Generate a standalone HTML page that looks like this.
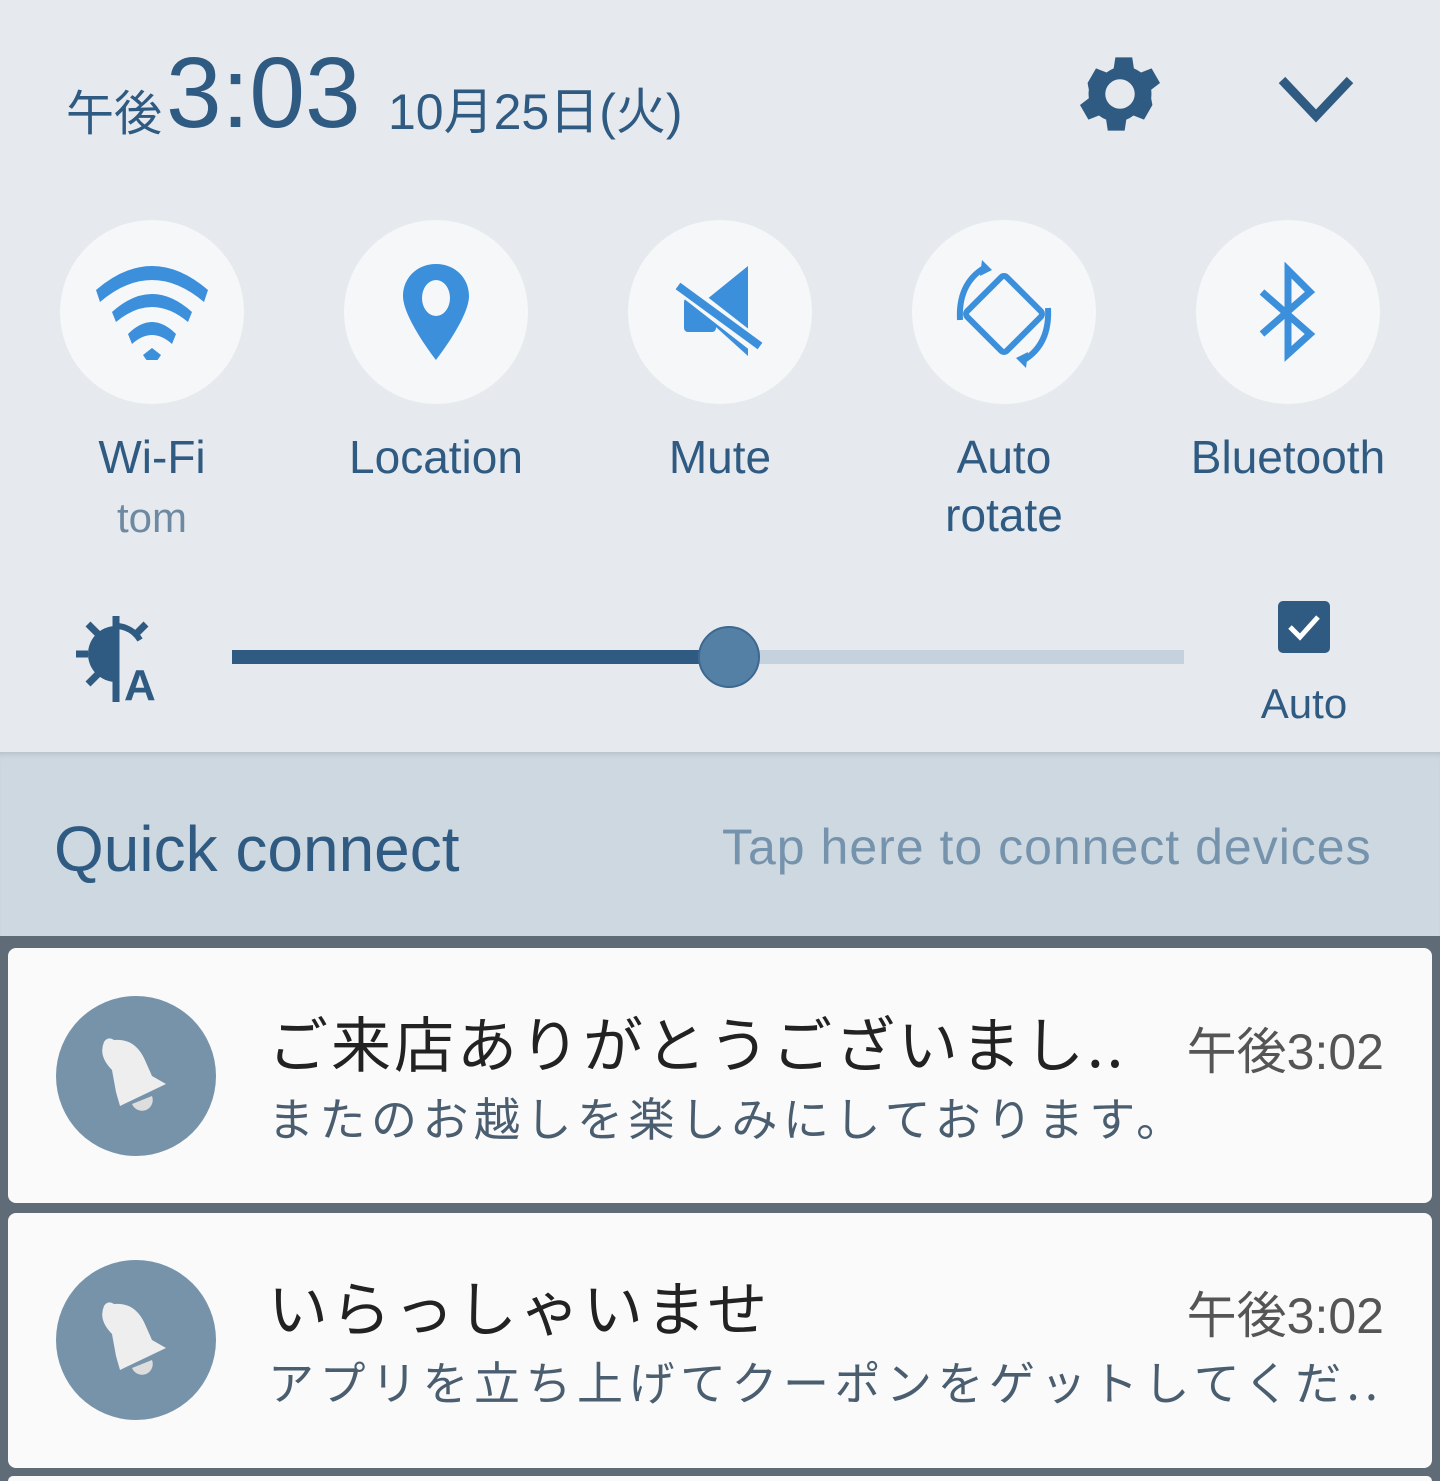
<!DOCTYPE html>
<html><head><meta charset="utf-8"><style>
*{margin:0;padding:0;box-sizing:border-box}
html,body{width:1440px;height:1481px;overflow:hidden}
body{background:#5f6b76;font-family:"Liberation Sans","Noto Sans CJK JP",sans-serif;position:relative}
.a{position:absolute}
.top{left:0;top:0;width:1440px;height:752px;background:#e6eaee}
.qc{left:0;top:752px;width:1440px;height:184px;background:#cdd8e0;box-shadow:inset 0 6px 6px -4px rgba(0,0,0,.12)}
.c{width:184px;height:184px;border-radius:50%;background:#f5f7f9;top:220px}
.lbl{color:#2f5a82;font-size:46px;text-align:center;width:284px;top:428px;line-height:58px}
.card{left:8px;width:1424px;background:#fafafa;border-radius:8px}
.av{left:56px;width:160px;height:160px;border-radius:50%;background:#7793aa}
.t1{left:268px;font-size:60px;color:#222;font-family:"Noto Sans CJK JP",sans-serif;letter-spacing:3px}
.t2{left:268px;font-size:46px;color:#4a5e70;font-family:"Noto Sans CJK JP",sans-serif;letter-spacing:5.5px}
.tm{right:56px;font-size:50px;color:#555;font-family:"Liberation Sans","Noto Sans CJK JP",sans-serif}
</style></head><body>
<div class="a top"></div>
<div class="a" style="left:66px;top:74px;font-size:48px;color:#2f5a82;font-family:'Noto Sans CJK JP',sans-serif">午後</div>
<div class="a" style="left:166px;top:38px;font-size:100px;color:#2f5a82;line-height:110px">3:03</div>
<div class="a" style="left:388px;top:72px;font-size:50px;color:#2f5a82;font-family:'Liberation Sans','Noto Sans CJK JP',sans-serif">10月25日(火)</div>
<svg class="a" style="left:1080px;top:54px" width="80" height="80" viewBox="2.5 2.5 19 19"><path fill="#2f5a82" d="M19.4 13a7.5 7.5 0 0 0 0-2l2.1-1.6-2-3.5-2.5 1a7.3 7.3 0 0 0-1.7-1l-.4-2.6h-4l-.4 2.6a7.3 7.3 0 0 0-1.7 1l-2.5-1-2 3.5L4.6 11a7.5 7.5 0 0 0 0 2l-2.1 1.6 2 3.5 2.5-1a7.3 7.3 0 0 0 1.7 1l.4 2.6h4l.4-2.6a7.3 7.3 0 0 0 1.7-1l2.5 1 2-3.5zM12 15.5a3.5 3.5 0 1 1 0-7 3.5 3.5 0 0 1 0 7z"/></svg>
<svg class="a" style="left:1276px;top:74px" width="80" height="52"><path d="M6 6 L40 42 L74 6" fill="none" stroke="#2f5a82" stroke-width="9"/></svg>

<div class="a c" style="left:60px"></div>
<div class="a c" style="left:344px"></div>
<div class="a c" style="left:628px"></div>
<div class="a c" style="left:912px"></div>
<div class="a c" style="left:1196px"></div>
<svg class="a" style="left:92px;top:260px" width="120" height="100"><g fill="#3b8fdb"><path d="M4 30 Q60 -18 116 30 L112 42 Q60 -2 8 42z"/><path d="M20 52 Q60 16 100 52 L96 62 Q60 32 24 62z"/><path d="M36 74 Q60 50 84 74 L80 84 Q60 66 40 84z"/><path d="M51 95 L60 88 L69 95 L60 108Z"/></g></svg>
<svg class="a" style="left:400px;top:262px" width="72" height="100" viewBox="0 0 72 100"><path fill="#3b8fdb" fill-rule="evenodd" d="M36 2C17 2 3 16 3 34c0 22 33 64 33 64s33-42 33-64C69 16 55 2 36 2zm0 16a14 18 0 1 1 0 36 14 18 0 1 1 0-36z"/></svg>
<svg class="a" style="left:672px;top:266px" width="96" height="92"><g fill="#3b8fdb"><path d="M14 34h20l42-34v90z"/><rect x="12" y="32" width="32" height="34" rx="4"/></g><path d="M6 18 L88 82" stroke="#f5f7f9" stroke-width="16"/><path d="M6 20 L88 80" stroke="#3b8fdb" stroke-width="8"/></svg>
<svg class="a" style="left:946px;top:256px" width="116" height="116"><g fill="none" stroke="#3b8fdb" stroke-width="6"><rect x="30" y="30" width="56" height="56" rx="4" transform="rotate(45 58 58)"/><path d="M14 64 Q12 28 38 12"/><path d="M102 52 Q104 88 78 104"/></g><path d="M36 4 L46 14 L34 20z M80 112 L70 102 L82 96z" fill="#3b8fdb"/></svg>
<svg class="a" style="left:1250px;top:262px" width="76" height="102"><path d="M12 30 L60 72 L38 92 V8 L60 30 L12 72" fill="none" stroke="#3b8fdb" stroke-width="7"/></svg>

<div class="a lbl" style="left:10px">Wi-Fi</div>
<div class="a" style="left:10px;width:284px;text-align:center;top:494px;font-size:42px;color:#6e8aa3">tom</div>
<div class="a lbl" style="left:294px">Location</div>
<div class="a lbl" style="left:578px">Mute</div>
<div class="a lbl" style="left:862px">Auto<br>rotate</div>
<div class="a lbl" style="left:1146px">Bluetooth</div>

<svg class="a" style="left:74px;top:616px" width="90" height="86"><g stroke="#2f5a82" stroke-width="7"><path d="M42 0v86M2 38h12M14 8l10 10M72 8l-10 10M14 68l10-10"/></g><path d="M42 10a28 28 0 0 0 0 56z" fill="#2f5a82"/><path d="M42 10a28 28 0 0 1 24 14" fill="none" stroke="#2f5a82" stroke-width="6"/><text x="50" y="84" font-size="44" font-weight="bold" fill="#2f5a82" font-family="Liberation Sans">A</text></svg>
<div class="a" style="left:232px;top:650px;width:952px;height:14px;background:#c5d1dc"></div>
<div class="a" style="left:232px;top:650px;width:498px;height:14px;background:#2f5a82"></div>
<div class="a" style="left:698px;top:626px;width:62px;height:62px;border-radius:50%;background:#5580a6;border:2px solid #3d6890"></div>
<div class="a" style="left:1278px;top:601px;width:52px;height:52px;border-radius:5px;background:#2f5a82"></div>
<svg class="a" style="left:1278px;top:601px" width="52" height="52"><path d="M12 26l10 10 18-20" fill="none" stroke="#fff" stroke-width="5"/></svg>
<div class="a" style="left:1244px;top:680px;width:120px;text-align:center;font-size:42px;color:#2f5a82">Auto</div>

<div class="a qc"></div>
<div class="a" style="left:54px;top:812px;font-size:64px;color:#2f5a82">Quick connect</div>
<div class="a" style="left:722px;top:818px;font-size:50px;color:#7693ad;letter-spacing:1px">Tap here to connect devices</div>

<div class="a card" style="top:948px;height:255px"></div>
<div class="a av" style="top:996px"></div>
<div class="a t1" style="top:998px">ご来店ありがとうございまし..</div>
<div class="a tm" style="top:1012px">午後3:02</div>
<div class="a t2" style="top:1084px">またのお越しを楽しみにしております。</div>

<div class="a card" style="top:1213px;height:255px"></div>
<div class="a av" style="top:1260px"></div>
<div class="a t1" style="top:1262px">いらっしゃいませ</div>
<div class="a tm" style="top:1276px">午後3:02</div>
<div class="a t2" style="top:1348px">アプリを立ち上げてクーポンをゲットしてくだ..</div>
<div class="a card" style="top:1476px;height:5px;border-radius:8px 8px 0 0"></div>

<svg class="a" style="left:96px;top:1030px" width="84" height="84"><path d="M8 12q4-6 10-2q20-2 30 18l8 18 14 8-46 22-4-14-4-22q-14-14-8-28z" fill="#eee"/><path d="M36 74 a10 10 0 0 0 20 -8z" fill="#ddd"/></svg>
<svg class="a" style="left:96px;top:1294px" width="84" height="84"><path d="M8 12q4-6 10-2q20-2 30 18l8 18 14 8-46 22-4-14-4-22q-14-14-8-28z" fill="#eee"/><path d="M36 74 a10 10 0 0 0 20 -8z" fill="#ddd"/></svg>
</body></html>
